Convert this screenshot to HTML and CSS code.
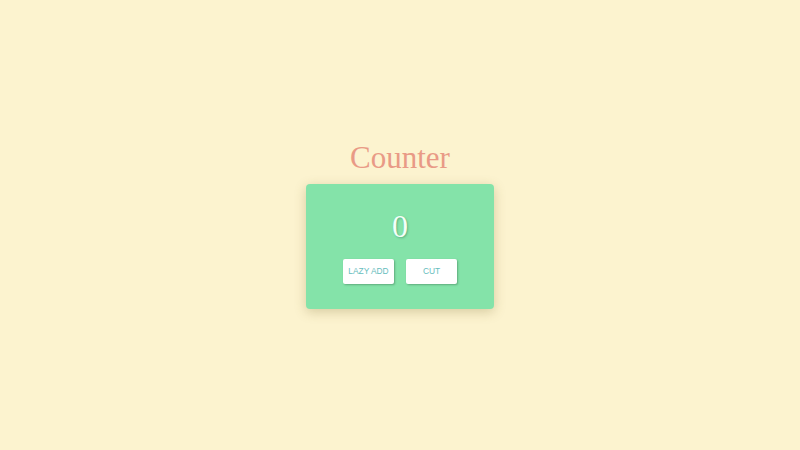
FILE: index.html
```html
<!DOCTYPE html>
<html>
<head>
<meta charset="utf-8">
<link rel="stylesheet" href="styles.css">
</head>
<body>
<div class="page">
  <h1 class="title">Counter</h1>
  <div class="card">
    <div class="count">0</div>
    <div class="actions">
      <button class="btn">LAZY ADD</button>
      <button class="btn">CUT</button>
    </div>
  </div>
</div>
</body>
</html>
```

FILE: styles.css
```css
html, body {
  margin: 0;
  padding: 0;
  height: 100%;
}
body {
  background: #fcf3cf;
  font-family: "Liberation Serif", serif;
}
.page {
  height: 100%;
  display: flex;
  flex-direction: column;
  align-items: center;
  justify-content: center;
}
.title {
  margin: 0 0 10px 0;
  font-size: 31px;
  font-weight: normal;
  line-height: 32px;
  color: #e99a86;
}
.card {
  box-sizing: border-box;
  width: 188px;
  height: 125px;
  background: #84e3a9;
  border-radius: 4px;
  box-shadow: 0 3px 12px rgba(120, 100, 40, 0.28);
  display: flex;
  flex-direction: column;
  align-items: center;
  padding-top: 24px;
}
.count {
  font-size: 32px;
  line-height: 37px;
  color: #f4fff8;
  text-shadow: 1px 1px 2px rgba(40, 110, 80, 0.45);
}
.actions {
  display: flex;
  gap: 12px;
  margin-top: 14px;
}
.btn {
  width: 51px;
  height: 25px;
  padding: 0;
  border: none;
  border-radius: 2px;
  background: #ffffff;
  color: #66bdbd;
  font-family: "Liberation Sans", Arial, sans-serif;
  font-size: 8.4px;
  box-shadow: 1px 1px 2px rgba(40, 90, 60, 0.4);
}
```
